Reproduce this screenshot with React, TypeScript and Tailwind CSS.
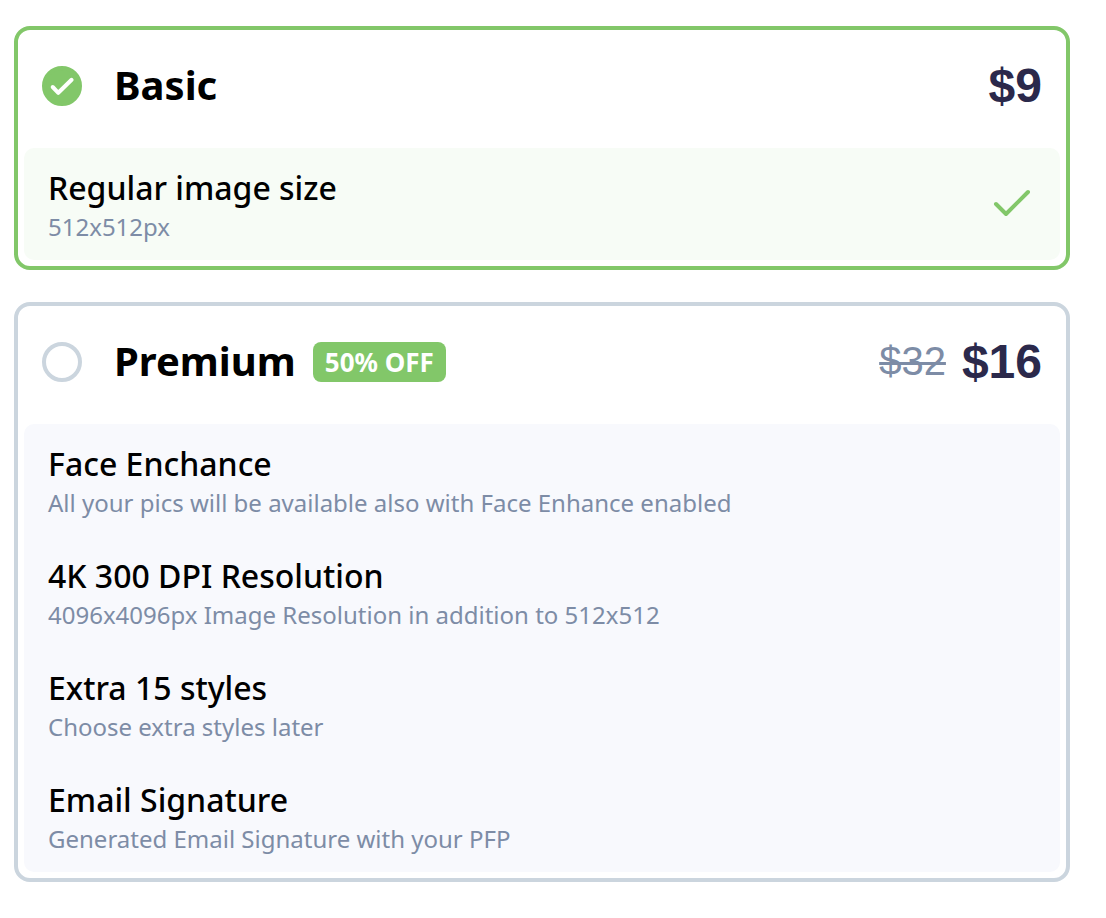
import { useState } from "react";

type Feature = { title: string; detail: string };

type Plan = {
  id: string;
  name: string;
  price: string;
  oldPrice?: string;
  badge?: string;
  features: Feature[];
};

const plans: Plan[] = [
  {
    id: "basic",
    name: "Basic",
    price: "$9",
    features: [{ title: "Regular image size", detail: "512x512px" }],
  },
  {
    id: "premium",
    name: "Premium",
    price: "$16",
    oldPrice: "$32",
    badge: "50% OFF",
    features: [
      { title: "Face Enchance", detail: "All your pics will be available also with Face Enhance enabled" },
      { title: "4K 300 DPI Resolution", detail: "4096x4096px Image Resolution in addition to 512x512" },
      { title: "Extra 15 styles", detail: "Choose extra styles later" },
      { title: "Email Signature", detail: "Generated Email Signature with your PFP" },
    ],
  },
];

function PlanCard({ plan, selected, onSelect }: { plan: Plan; selected: boolean; onSelect: () => void }) {
  return (
    <section className={`rounded-2xl border-4 p-[6px] ${selected ? "border-[#82c769]" : "border-[#cbd5de]"}`}>
      <label htmlFor={plan.id} className="flex h-28 cursor-pointer items-start justify-between px-[18px] pt-[26px]">
        <span className="flex h-12 items-center">
          <span className="grid size-10 shrink-0 place-items-center">
            <input
              type="radio"
              id={plan.id}
              name="plan"
              checked={selected}
              onChange={onSelect}
              className="col-start-1 row-start-1 size-10 cursor-pointer appearance-none rounded-full border-4 border-[#cbd5de] checked:border-[#82c769] checked:bg-[#82c769]"
            />
            {selected && (
              <svg viewBox="0 0 40 40" className="pointer-events-none col-start-1 row-start-1 size-10" fill="none" aria-hidden="true">
                <path d="M10.7 21 16.3 26.8 29.6 13.8" stroke="white" strokeWidth="4" strokeLinecap="round" strokeLinejoin="round" />
              </svg>
            )}
          </span>
          <span className="ml-8 self-start text-[40px] leading-[46px] font-bold text-black">{plan.name}</span>
          {plan.badge && (
            <span className="ml-[17px] rounded-lg bg-[#82c769] px-3 text-[26px] leading-10 font-bold whitespace-nowrap text-white">
              {plan.badge}
            </span>
          )}
        </span>
        <span className="flex h-12 items-start gap-4 font-['Liberation_Sans',Arial,sans-serif]">
          {plan.oldPrice && <s className="text-[40px] leading-[46px] text-[#7d8ca6] decoration-[3px]">{plan.oldPrice}</s>}
          <span className="text-5xl leading-[48px] font-bold text-[#2b294b]">{plan.price}</span>
        </span>
      </label>
      <ul className={`rounded-[10px] ${selected ? "bg-[#f7fcf6]" : "bg-[#f8f9fd]"}`}>
        {plan.features.map((feature) => (
          <li key={feature.title} className="flex items-center justify-between px-6 pt-5 pb-[14px]">
            <div>
              <h3 className="text-[32px] leading-10 font-medium text-black">{feature.title}</h3>
              <p className="text-2xl leading-[38px] text-[#7d8ca6]">{feature.detail}</p>
            </div>
            {selected && (
              <svg viewBox="0 0 48 48" className="size-12 shrink-0" fill="none" aria-hidden="true">
                <path d="M8 21 18 31 40 9" stroke="#82c769" strokeWidth="4" strokeLinecap="round" strokeLinejoin="round" />
              </svg>
            )}
          </li>
        ))}
      </ul>
    </section>
  );
}

export default function App() {
  const [selected, setSelected] = useState("basic");

  return (
    <main className="flex min-h-screen flex-col gap-8 bg-white pt-[26px] pr-9 pb-9 pl-[14px] font-['Noto_Sans',sans-serif]">
      {plans.map((plan) => (
        <PlanCard key={plan.id} plan={plan} selected={plan.id === selected} onSelect={() => setSelected(plan.id)} />
      ))}
    </main>
  );
}
